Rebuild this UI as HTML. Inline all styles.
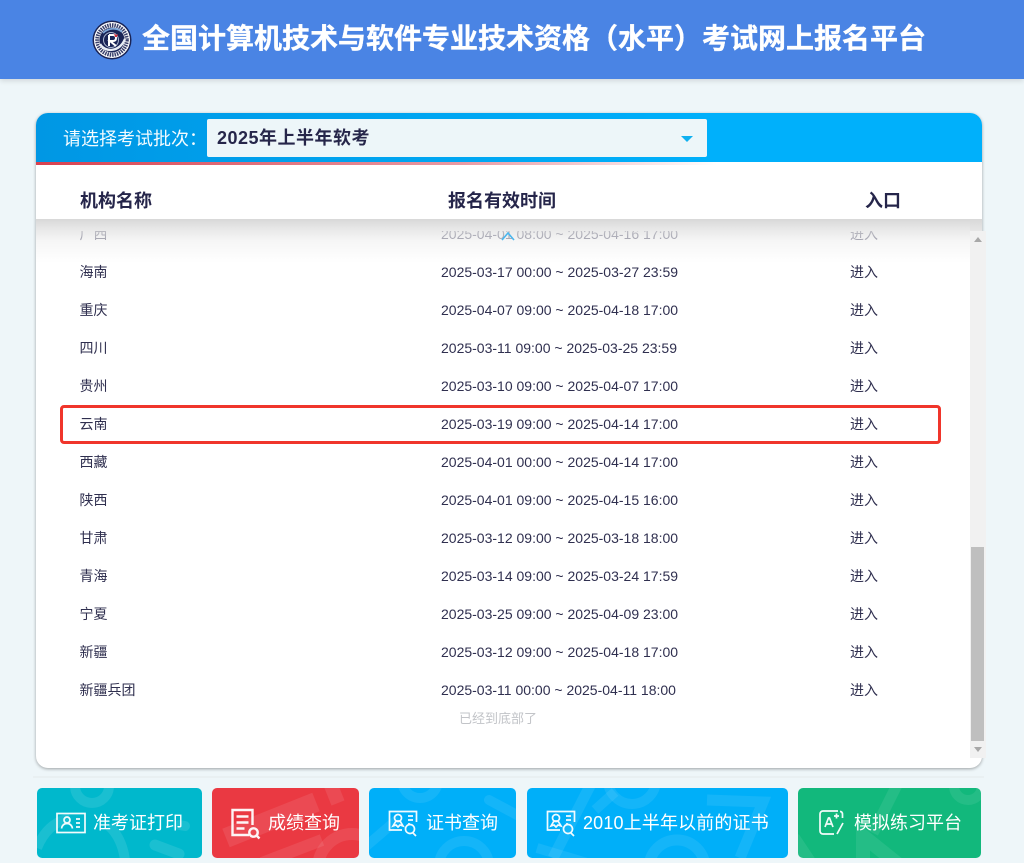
<!DOCTYPE html>
<html lang="zh-CN">
<head>
<meta charset="utf-8">
<title>全国计算机技术与软件专业技术资格（水平）考试网上报名平台</title>
<style>
html,body{margin:0;padding:0;width:1024px;height:863px;overflow:hidden;background:#eef6f9;font-family:"Liberation Sans","Noto Sans CJK SC",sans-serif;color:#2a2a4c}
*{box-sizing:border-box}
.a{position:absolute}
#hd{left:0;top:0;width:1024px;height:79px;background:#4a84e4;box-shadow:0 2px 5px rgba(0,0,0,.12)}
#title{left:142px;top:18px;font-size:28px;line-height:42px;font-weight:700;color:#fff;white-space:nowrap;-webkit-text-stroke:.35px #fff}
#card{left:36px;top:113px;width:946px;height:655px;background:#fff;border-radius:12px;box-shadow:0 1px 3px rgba(0,0,0,.35);overflow:hidden}
#bar{left:36px;top:113px;width:946px;height:49px;border-radius:12px 12px 0 0;background:linear-gradient(90deg,#0097e4 0,#00b0fb 72%)}
#red{left:36px;top:162px;width:946px;height:3px;background:linear-gradient(90deg,#d8414f 0,#e99aa3 45%,rgba(255,255,255,0) 72%)}
#lab{left:63px;top:126px;font-size:18px;line-height:27px;color:#f2fbff;white-space:nowrap}
#sel{left:207px;top:119px;width:500px;height:38px;background:#edf6f9;border-radius:2px}
#seltxt{left:217px;top:125px;font-size:18px;line-height:27px;font-weight:700;color:#26264a;white-space:nowrap;letter-spacing:.5px}
#tri{left:681px;top:136px;width:0;height:0;border-left:6px solid transparent;border-right:6px solid transparent;border-top:6px solid #0fb0f0}
.th{top:188px;font-size:18px;line-height:26px;font-weight:700;color:#25254a;white-space:nowrap}
.c1,.c2,.c3{position:absolute;font-size:14px;line-height:20px;white-space:nowrap;color:#2f2f4f}
.c1{left:79.500px}.c2{left:441px}.c3{left:850px}
#clip{left:36px;top:231px;width:934px;height:498px;overflow:hidden}
#rows{left:-36px;top:-231px;width:1024px;height:800px}
#fade{left:36px;top:219px;width:934px;height:44px;background:linear-gradient(180deg,rgba(216,216,216,1) 0,rgba(226,226,226,.82) 22%,rgba(240,240,240,.6) 50%,rgba(255,255,255,0) 100%)}
#fade2{left:970px;top:219px;width:12px;height:12px;background:linear-gradient(180deg,#d8d8d8,#e6e6e6)}
#end{left:459px;top:710px;font-size:13px;line-height:18px;color:#c2c4c8;white-space:nowrap}
#sb{left:970px;top:231px;width:16px;height:527px;background:#f1f1f1}
#thumb{left:971px;top:547px;width:13px;height:194px;background:#bfbfbf}
#up{left:974px;top:237px;width:0;height:0;border-left:4px solid transparent;border-right:4px solid transparent;border-bottom:5px solid #a8a8a8}
#dn{left:974px;top:747px;width:0;height:0;border-left:4px solid transparent;border-right:4px solid transparent;border-top:5px solid #a8a8a8}
#hl{left:60px;top:405px;width:881px;height:39px;border:3px solid #f0352b;border-radius:4px}
#ln{left:33px;top:776px;width:951px;height:2px;background:#e9f0f2}
.b{top:788px;height:70px;border-radius:5px;overflow:hidden}
.b svg.d{position:absolute;left:0;top:0}
.t{position:absolute;top:810px;font-size:18px;line-height:27px;color:#fff;white-space:nowrap}
.i{position:absolute;fill:none;stroke:#fff;stroke-width:1.7;opacity:.95}
</style>
</head>
<body>
<div class="a" id="hd"></div>
<svg class="a" style="left:92px;top:20px" width="40" height="40" viewBox="0 0 40 40">
<circle cx="20" cy="20" r="19.500" fill="#1a2456"/>
<circle cx="20" cy="20" r="18" fill="#fff"/>
<circle cx="20" cy="20" r="14.800" fill="none" stroke="#39406c" stroke-width="4" stroke-dasharray="1.500 .9"/>
<circle cx="20" cy="20" r="12.500" fill="#1a2456"/>
<path d="M8 24C13 33 28 32 33 19" fill="none" stroke="#e8edf5" stroke-width="2.400"/>
<path d="M11 13C16 8 25 7 30 12" fill="none" stroke="#7ea6d8" stroke-width="1.800"/>
<circle cx="19" cy="20" r="7.500" fill="none" stroke="#aeb9d2" stroke-width="1"/>
<path d="M17 15V26M17 15h4q3 0 3 3t-3 3h-3l6 5" fill="none" stroke="#fff" stroke-width="2"/>
<path d="M22 13l2 2 2-1-1 3-2 0z" fill="#d6303c"/>
</svg>
<div class="a" id="title">全国计算机技术与软件专业技术资格（水平）考试网上报名平台</div>

<div class="a" id="card"></div>
<div class="a" id="bar"></div>
<div class="a" id="red"></div>
<div class="a" id="lab">请选择考试批次：</div>
<div class="a" id="sel"></div>
<div class="a" id="seltxt">2025年上半年软考</div>
<div class="a" id="tri"></div>

<div class="a th" style="left:80px">机构名称</div>
<div class="a th" style="left:448px">报名有效时间</div>
<div class="a th" style="left:865px">入口</div>

<div class="a" id="clip"><div class="a" id="rows">
<span class="c1" style="top:224px">广西</span><span class="c2" style="top:224px">2025-04-01 08:00 ~ 2025-04-16 17:00</span><span class="c3" style="top:224px">进入</span>
<span class="c1" style="top:262px">海南</span><span class="c2" style="top:262px">2025-03-17 00:00 ~ 2025-03-27 23:59</span><span class="c3" style="top:262px">进入</span>
<span class="c1" style="top:300px">重庆</span><span class="c2" style="top:300px">2025-04-07 09:00 ~ 2025-04-18 17:00</span><span class="c3" style="top:300px">进入</span>
<span class="c1" style="top:338px">四川</span><span class="c2" style="top:338px">2025-03-11 09:00 ~ 2025-03-25 23:59</span><span class="c3" style="top:338px">进入</span>
<span class="c1" style="top:376px">贵州</span><span class="c2" style="top:376px">2025-03-10 09:00 ~ 2025-04-07 17:00</span><span class="c3" style="top:376px">进入</span>
<span class="c1" style="top:414px">云南</span><span class="c2" style="top:414px">2025-03-19 09:00 ~ 2025-04-14 17:00</span><span class="c3" style="top:414px">进入</span>
<span class="c1" style="top:452px">西藏</span><span class="c2" style="top:452px">2025-04-01 00:00 ~ 2025-04-14 17:00</span><span class="c3" style="top:452px">进入</span>
<span class="c1" style="top:490px">陕西</span><span class="c2" style="top:490px">2025-04-01 09:00 ~ 2025-04-15 16:00</span><span class="c3" style="top:490px">进入</span>
<span class="c1" style="top:528px">甘肃</span><span class="c2" style="top:528px">2025-03-12 09:00 ~ 2025-03-18 18:00</span><span class="c3" style="top:528px">进入</span>
<span class="c1" style="top:566px">青海</span><span class="c2" style="top:566px">2025-03-14 09:00 ~ 2025-03-24 17:59</span><span class="c3" style="top:566px">进入</span>
<span class="c1" style="top:604px">宁夏</span><span class="c2" style="top:604px">2025-03-25 09:00 ~ 2025-04-09 23:00</span><span class="c3" style="top:604px">进入</span>
<span class="c1" style="top:642px">新疆</span><span class="c2" style="top:642px">2025-03-12 09:00 ~ 2025-04-18 17:00</span><span class="c3" style="top:642px">进入</span>
<span class="c1" style="top:680px">新疆兵团</span><span class="c2" style="top:680px">2025-03-11 00:00 ~ 2025-04-11 18:00</span><span class="c3" style="top:680px">进入</span>
</div></div>
<div class="a" id="end">已经到底部了</div>

<div class="a" id="fade"></div>
<div class="a" id="fade2"></div>
<svg class="a" style="left:500px;top:229px" width="16" height="13" viewBox="0 0 16 13"><path d="M2 11L8 4l6 7" fill="none" stroke="#4ab6ee" stroke-width="1.600"/></svg>

<div class="a" id="sb"></div>
<div class="a" id="thumb"></div>
<div class="a" id="up"></div>
<div class="a" id="dn"></div>

<div class="a" id="hl"></div>
<div class="a" id="ln"></div>

<div class="a b" style="left:37px;width:165px;background:#00b8cc"><svg class="d" width="165" height="70" fill="none" stroke="#fff" stroke-opacity=".1"><circle cx="55" cy="-2" r="17" stroke-width="10"/><path d="M0 60Q10 35 33 30" stroke-width="10"/><path d="M72 38Q85 50 88 72" stroke-width="10"/><path d="M118 57l24 9" stroke-width="11" stroke-linecap="round"/><path d="M142 37l6 1" stroke-width="10" stroke-linecap="round"/></svg></div>
<div class="a b" style="left:212px;width:147px;background:#ea3942"><svg class="d" width="147" height="70" fill="none" stroke="#fff" stroke-opacity=".09"><path d="M14 50L104 14" stroke-width="20"/><path d="M118 -5l8 20" stroke-width="14"/><circle cx="140" cy="80" r="34" stroke-width="12"/><path d="M50 75L110 52" stroke-width="12"/></svg></div>
<div class="a b" style="left:369px;width:147px;background:#00aff9"><svg class="d" width="147" height="70" fill="none" stroke="#fff" stroke-opacity=".08"><circle cx="51" cy="-8" r="18" stroke-width="10"/><path d="M-5 60L30 30" stroke-width="10"/><path d="M120 12l30 16" stroke-width="10" stroke-linecap="round"/><circle cx="95" cy="78" r="25" stroke-width="10"/></svg></div>
<div class="a b" style="left:527px;width:261px;background:#00aff9"><svg class="d" width="261" height="70" fill="none" stroke="#fff" stroke-opacity=".08"><path d="M26 70L66 -8" stroke-width="11"/><circle cx="105" cy="-8" r="24" stroke-width="10"/><path d="M68 22L88 4" stroke-width="10"/><path d="M180 12l56 2-23 56" stroke-width="11"/><circle cx="150" cy="80" r="28" stroke-width="11"/><path d="M10 60l60 18" stroke-width="10"/></svg></div>
<div class="a b" style="left:798px;width:183px;background:#12b87c"><svg class="d" width="183" height="70" fill="none" stroke="#fff" stroke-opacity=".08"><path d="M-5 50L15 80" stroke-width="14"/><path d="M100 -5L75 45" stroke-width="11"/><path d="M65 78V48l35 28" stroke-width="14"/><circle cx="170" cy="-2" r="14" stroke-width="10"/></svg></div>

<svg class="i" style="left:56px;top:812px" width="30" height="22" viewBox="0 0 30 22"><rect x="1" y="1.500" width="28" height="19"/><circle cx="11" cy="8" r="3"/><path d="M5.500 16.500q1-5 5.500-5t5.500 5"/><path d="M20 7h4M20 11h4M20 15h4"/></svg>
<div class="t" style="left:93px">准考证打印</div>

<svg class="i" style="left:230px;top:808px;stroke-width:2.400" width="32" height="32" viewBox="0 0 32 32"><path d="M19 27H2.500V2h20v15"/><path d="M6.500 8.500h12M6.500 14.500h12M6.500 20.500h8"/><circle cx="23.500" cy="24.500" r="4.200"/><path d="M26.500 27.500l3 3"/></svg>
<div class="t" style="left:268px">成绩查询</div>

<svg class="i" style="left:388px;top:810px" width="30" height="28" viewBox="0 0 30 28"><path d="M14 20H1.500V1.500h27V12"/><circle cx="10" cy="8" r="3.500"/><path d="M5 16l3-5h4l3 5-3-1-2 2-2-2z"/><path d="M20 6h5M20 10h5M20 14h2"/><circle cx="22" cy="19" r="4.500"/><path d="M25 23l3 3"/></svg>
<div class="t" style="left:426px">证书查询</div>

<svg class="i" style="left:546px;top:810px" width="30" height="28" viewBox="0 0 30 28"><path d="M14 20H1.500V1.500h27V12"/><circle cx="10" cy="8" r="3.500"/><path d="M5 16l3-5h4l3 5-3-1-2 2-2-2z"/><path d="M20 6h5M20 10h5M20 14h2"/><circle cx="22" cy="19" r="4.500"/><path d="M25 23l3 3"/></svg>
<div class="t" style="left:583px;letter-spacing:.15px">2010上半年以前的证书</div>

<svg class="i" style="left:819px;top:810px" width="26" height="26" viewBox="0 0 26 26"><path d="M19 1H4a3 3 0 0 0-3 3v17a3 3 0 0 0 3 3h11"/><path d="M21 1.500q2.500 0 2.500 3V8"/><path d="M6 17l3.500-9h1L14 17M7.500 14h5"/><path d="M15 6h5M17.500 3.500v5"/><path d="M18 24l6-11"/></svg>
<div class="t" style="left:854px">模拟练习平台</div>
</body>
</html>
